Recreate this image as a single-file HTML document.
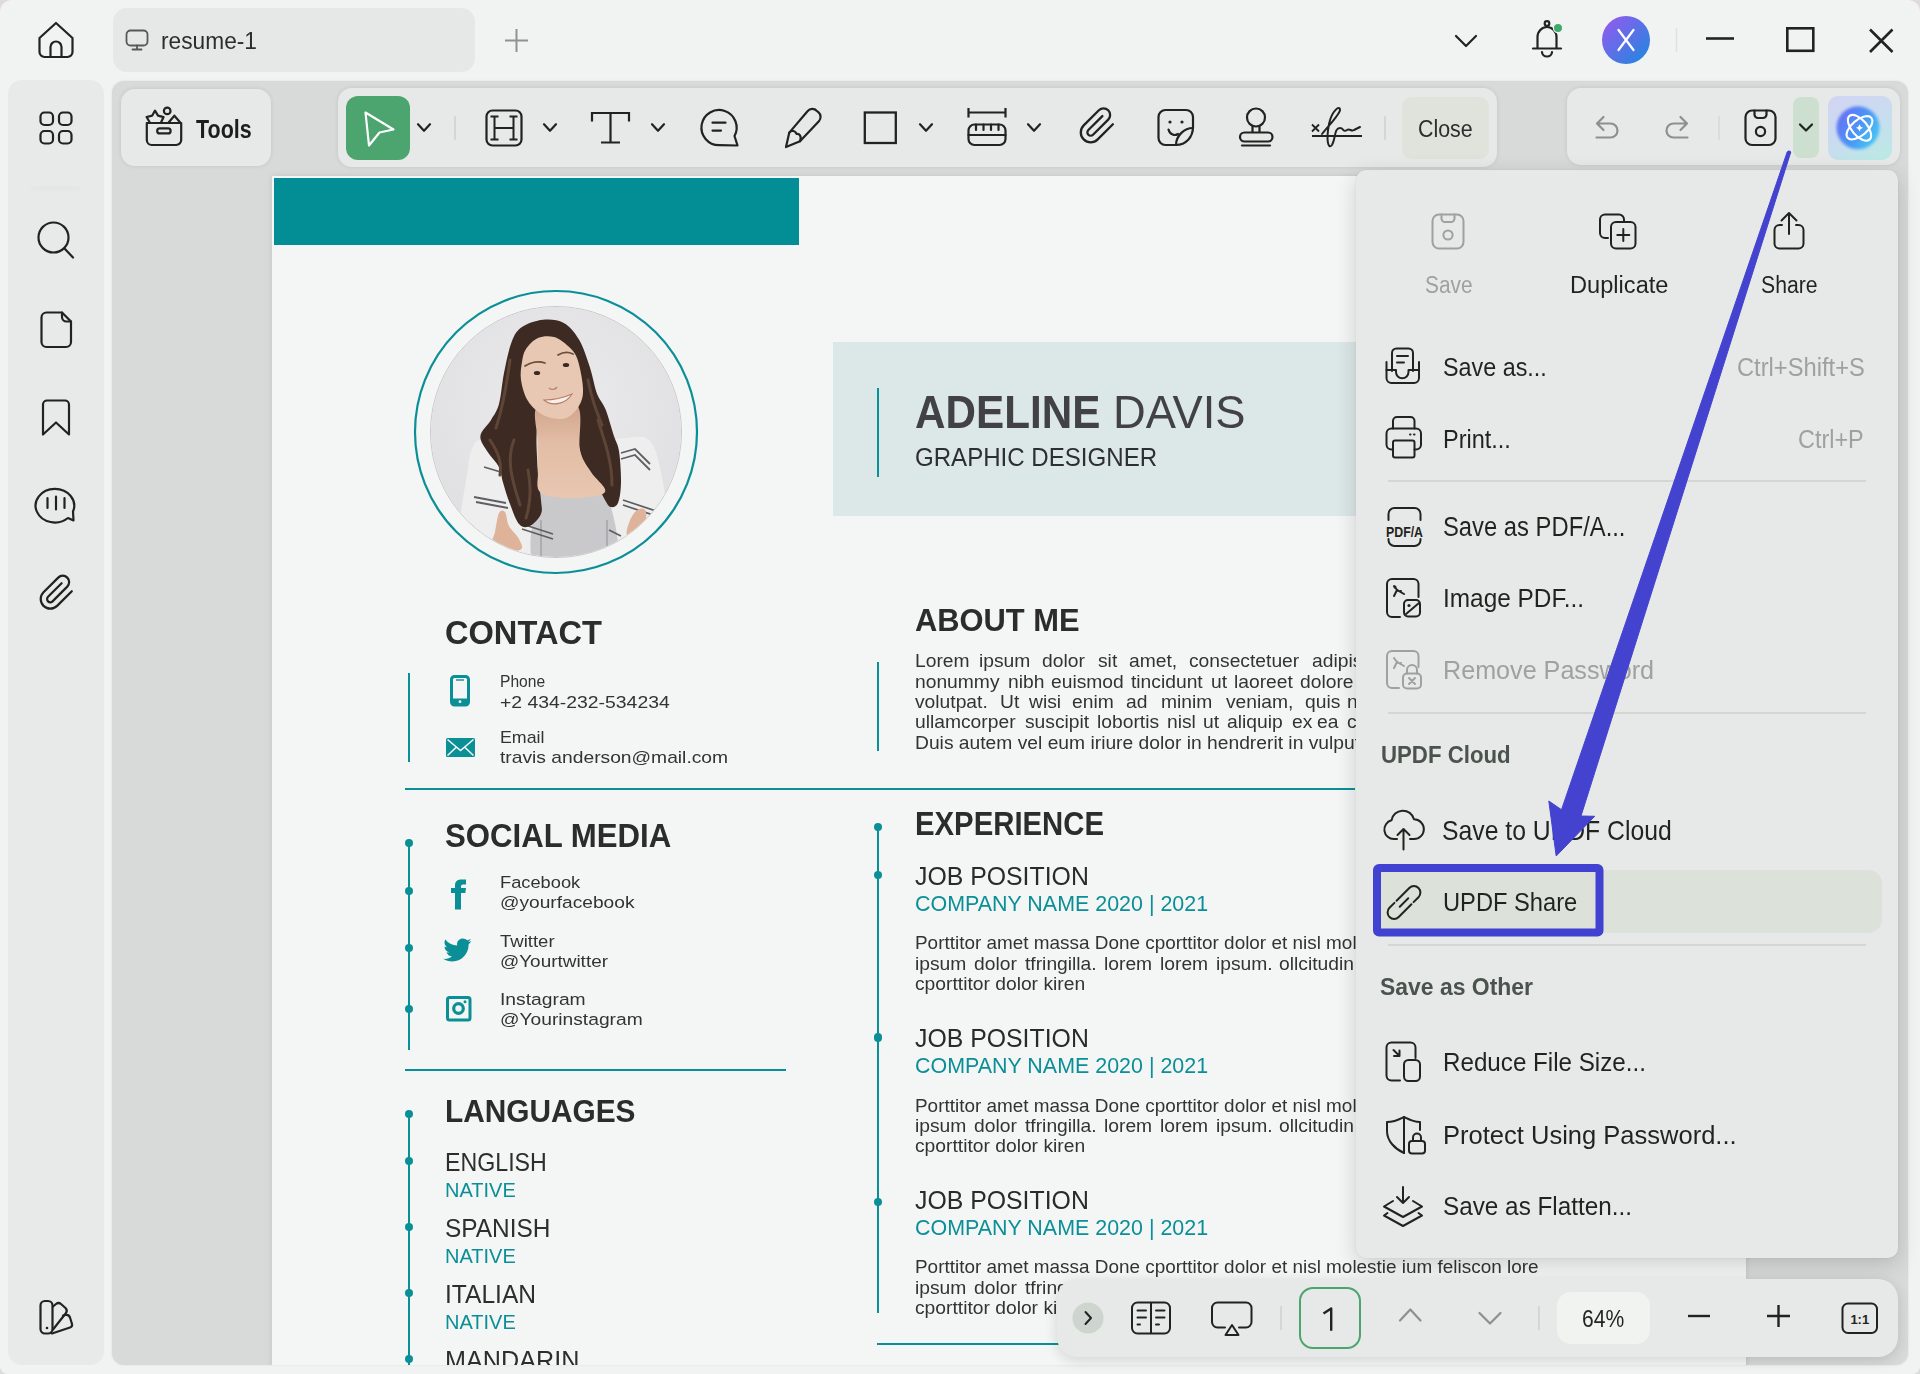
<!DOCTYPE html>
<html><head><meta charset="utf-8">
<style>
*{margin:0;padding:0;box-sizing:border-box}
html,body{width:1920px;height:1374px;overflow:hidden;background:#f1f3f2;font-family:"Liberation Sans",sans-serif}
.a{position:absolute}
svg.a{overflow:visible}
.t{position:absolute;white-space:nowrap;transform-origin:0 0}
</style></head><body>
<div class="a" style="left:0;top:0;width:1920px;height:1374px;background:#dfdbdd"></div><div class="a" style="left:0;top:0;width:1920px;height:1374px;background:#f1f3f2;border-radius:12px 12px 8px 8px"></div>
<div class="a" style="left:113px;top:8px;width:362px;height:64px;background:#e5e8e6;border-radius:14px;"></div>
<div class="t" id="t1" style="left:161.0px;top:29.1px;font-size:24.64px;line-height:24.64px;color:#2a2f2c;font-weight:normal;transform:scaleX(0.9231);">resume-1</div>
<div class="a" style="left:8px;top:80px;width:96px;height:1285px;background:#e7eae8;border-radius:14px;"></div>
<div class="a" style="left:32px;top:187px;width:48px;height:3px;background:#e2e5e3;border-radius:2px;filter:blur(1px)"></div>
<div class="a" style="left:112px;top:81px;width:1796px;height:1284px;background:#d8dada;border-radius:12px;overflow:hidden;box-shadow:0 0 3px rgba(0,0,0,.08)"><div class="a" style="left:-112px;top:-81px;width:1920px;height:1374px">
<div class="a" style="left:272px;top:176px;width:1474px;height:1300px;background:#f4f5f5;border-radius:0px;box-shadow:0 0 6px rgba(0,0,0,.10)"></div>
<div class="a" style="left:274px;top:178px;width:525px;height:67px;background:#038d95;border-radius:0px;"></div>
<div class="a" style="left:833px;top:342px;width:870px;height:174px;background:#dce7e8;border-radius:0px;"></div>
<div class="a" style="left:876.5px;top:388px;width:2.2px;height:89px;background:#0a8f97;border-radius:0px;"></div>
<div class="t" id="t2" style="left:915.0px;top:389.7px;font-size:45.65px;line-height:45.65px;color:#424244;font-weight:bold;transform:scaleX(0.9250);">ADELINE</div>
<div class="t" id="t3" style="left:1113.0px;top:389.7px;font-size:45.65px;line-height:45.65px;color:#424244;font-weight:normal;transform:scaleX(0.9925);">DAVIS</div>
<div class="t" id="t4" style="left:915.0px;top:443.7px;font-size:26.67px;line-height:26.67px;color:#2e2f30;font-weight:normal;transform:scaleX(0.9030);">GRAPHIC DESIGNER</div>
<div class="t" id="t5" style="left:444.6px;top:615.5px;font-size:33.33px;line-height:33.33px;color:#2c2c2c;font-weight:bold;transform:scaleX(0.9775);">CONTACT</div>
<div class="a" style="left:408px;top:672.5px;width:2.2px;height:89px;background:#0a8f97;border-radius:0px;"></div>
<div class="t" id="t6" style="left:500.0px;top:674.0px;font-size:16.81px;line-height:16.81px;color:#333;font-weight:normal;transform:scaleX(0.9286);">Phone</div>
<div class="t" id="t7" style="left:500.0px;top:694.5px;font-size:16.81px;line-height:16.81px;color:#333;font-weight:normal;transform:scaleX(1.1537);">+2 434-232-534234</div>
<div class="t" id="t8" style="left:500.0px;top:729.5px;font-size:16.81px;line-height:16.81px;color:#333;font-weight:normal;transform:scaleX(1.0595);">Email</div>
<div class="t" id="t9" style="left:500.0px;top:750.3px;font-size:16.81px;line-height:16.81px;color:#333;font-weight:normal;transform:scaleX(1.1457);">travis anderson@mail.com</div>
<div class="a" style="left:405px;top:788.2px;width:950px;height:2px;background:#0a8f97;border-radius:0px;"></div>
<div class="t" id="t10" style="left:444.6px;top:819.3px;font-size:33.19px;line-height:33.19px;color:#2c2c2c;font-weight:bold;transform:scaleX(0.9394);">SOCIAL MEDIA</div>
<div class="a" style="left:408px;top:843px;width:2.2px;height:207px;background:#0a8f97;border-radius:0px;"></div>
<div class="a" style="left:405.0px;top:838.6px;width:8.2px;height:8.2px;border-radius:50%;background:#0a8f97"></div>
<div class="a" style="left:405.0px;top:886.5px;width:8.2px;height:8.2px;border-radius:50%;background:#0a8f97"></div>
<div class="a" style="left:405.0px;top:943.9px;width:8.2px;height:8.2px;border-radius:50%;background:#0a8f97"></div>
<div class="a" style="left:405.0px;top:1004.9px;width:8.2px;height:8.2px;border-radius:50%;background:#0a8f97"></div>
<div class="t" id="t11" style="left:500.0px;top:874.8px;font-size:16.67px;line-height:16.67px;color:#333;font-weight:normal;transform:scaleX(1.0959);">Facebook</div>
<div class="t" id="t12" style="left:500.0px;top:895.4px;font-size:16.52px;line-height:16.52px;color:#333;font-weight:normal;transform:scaleX(1.1603);">@yourfacebook</div>
<div class="t" id="t13" style="left:500.0px;top:933.8px;font-size:16.67px;line-height:16.67px;color:#333;font-weight:normal;transform:scaleX(1.1122);">Twitter</div>
<div class="t" id="t14" style="left:500.0px;top:953.5px;font-size:16.67px;line-height:16.67px;color:#333;font-weight:normal;transform:scaleX(1.1368);">@Yourtwitter</div>
<div class="t" id="t15" style="left:500.0px;top:991.8px;font-size:16.67px;line-height:16.67px;color:#333;font-weight:normal;transform:scaleX(1.1568);">Instagram</div>
<div class="t" id="t16" style="left:500.0px;top:1011.8px;font-size:16.67px;line-height:16.67px;color:#333;font-weight:normal;transform:scaleX(1.1532);">@Yourinstagram</div>
<div class="a" style="left:405px;top:1068.6px;width:381px;height:2px;background:#0a8f97;border-radius:0px;"></div>
<div class="t" id="t17" style="left:444.9px;top:1095.2px;font-size:32.03px;line-height:32.03px;color:#2c2c2c;font-weight:bold;transform:scaleX(0.9312);">LANGUAGES</div>
<div class="a" style="left:408px;top:1114px;width:2.2px;height:260px;background:#0a8f97;border-radius:0px;"></div>
<div class="a" style="left:405.0px;top:1109.5px;width:8.2px;height:8.2px;border-radius:50%;background:#0a8f97"></div>
<div class="a" style="left:405.0px;top:1157.2px;width:8.2px;height:8.2px;border-radius:50%;background:#0a8f97"></div>
<div class="a" style="left:405.0px;top:1223.2px;width:8.2px;height:8.2px;border-radius:50%;background:#0a8f97"></div>
<div class="a" style="left:405.0px;top:1289.3000000000002px;width:8.2px;height:8.2px;border-radius:50%;background:#0a8f97"></div>
<div class="a" style="left:405.0px;top:1355.2px;width:8.2px;height:8.2px;border-radius:50%;background:#0a8f97"></div>
<div class="t" id="t18" style="left:444.5px;top:1150.4px;font-size:25.36px;line-height:25.36px;color:#2e2e2e;font-weight:normal;transform:scaleX(0.9144);">ENGLISH</div>
<div class="t" id="t19" style="left:444.5px;top:1180.1px;font-size:20.72px;line-height:20.72px;color:#0a8f97;font-weight:normal;transform:scaleX(0.9658);">NATIVE</div>
<div class="t" id="t20" style="left:444.5px;top:1216.4px;font-size:25.36px;line-height:25.36px;color:#2e2e2e;font-weight:normal;transform:scaleX(0.9633);">SPANISH</div>
<div class="t" id="t21" style="left:444.5px;top:1246.0px;font-size:20.72px;line-height:20.72px;color:#0a8f97;font-weight:normal;transform:scaleX(0.9658);">NATIVE</div>
<div class="t" id="t22" style="left:444.5px;top:1282.4px;font-size:25.36px;line-height:25.36px;color:#2e2e2e;font-weight:normal;transform:scaleX(0.9691);">ITALIAN</div>
<div class="t" id="t23" style="left:444.5px;top:1312.2px;font-size:20.72px;line-height:20.72px;color:#0a8f97;font-weight:normal;transform:scaleX(0.9658);">NATIVE</div>
<div class="t" id="t24" style="left:444.5px;top:1348.4px;font-size:25.36px;line-height:25.36px;color:#2e2e2e;font-weight:normal;transform:scaleX(0.9933);">MANDARIN</div>
<div class="t" id="t25" style="left:914.7px;top:605.2px;font-size:31.74px;line-height:31.74px;color:#2c2c2c;font-weight:bold;transform:scaleX(0.9722);">ABOUT ME</div>
<div class="a" style="left:876.5px;top:661.6px;width:2.2px;height:89px;background:#0a8f97;border-radius:0px;"></div>
<!--para-->
<div class="t" style="left:914.7px;top:652.1px;font-size:18.26px;line-height:18.26px;color:#333;transform:scaleX(1.0547)">Lorem</div>
<div class="t" style="left:978.5px;top:652.1px;font-size:18.26px;line-height:18.26px;color:#333;transform:scaleX(1.0547)">ipsum</div>
<div class="t" style="left:1042.3px;top:652.1px;font-size:18.26px;line-height:18.26px;color:#333;transform:scaleX(1.0547)">dolor</div>
<div class="t" style="left:1097.5px;top:652.1px;font-size:18.26px;line-height:18.26px;color:#333;transform:scaleX(1.0547)">sit</div>
<div class="t" style="left:1128.75px;top:652.1px;font-size:18.26px;line-height:18.26px;color:#333;transform:scaleX(1.0547)">amet,</div>
<div class="t" style="left:1189.4px;top:652.1px;font-size:18.26px;line-height:18.26px;color:#333;transform:scaleX(1.0547)">consectetuer</div>
<div class="t" style="left:1312.3px;top:652.1px;font-size:18.26px;line-height:18.26px;color:#333;transform:scaleX(1.0547)">adipiscing</div>
<div class="t" style="left:914.7px;top:672.7px;font-size:18.26px;line-height:18.26px;color:#333;transform:scaleX(1.0547)">nonummy</div>
<div class="t" style="left:1007.6px;top:672.7px;font-size:18.26px;line-height:18.26px;color:#333;transform:scaleX(1.0547)">nibh</div>
<div class="t" style="left:1050.6px;top:672.7px;font-size:18.26px;line-height:18.26px;color:#333;transform:scaleX(1.0547)">euismod</div>
<div class="t" style="left:1130.8px;top:672.7px;font-size:18.26px;line-height:18.26px;color:#333;transform:scaleX(1.0547)">tincidunt</div>
<div class="t" style="left:1210.8px;top:672.7px;font-size:18.26px;line-height:18.26px;color:#333;transform:scaleX(1.0547)">ut</div>
<div class="t" style="left:1234.2px;top:672.7px;font-size:18.26px;line-height:18.26px;color:#333;transform:scaleX(1.0547)">laoreet</div>
<div class="t" style="left:1299.6px;top:672.7px;font-size:18.26px;line-height:18.26px;color:#333;transform:scaleX(1.0547)">dolore</div>
<div class="t" style="left:914.7px;top:693.0px;font-size:18.26px;line-height:18.26px;color:#333;transform:scaleX(1.0547)">volutpat.</div>
<div class="t" style="left:999.8px;top:693.0px;font-size:18.26px;line-height:18.26px;color:#333;transform:scaleX(1.0547)">Ut</div>
<div class="t" style="left:1029.3px;top:693.0px;font-size:18.26px;line-height:18.26px;color:#333;transform:scaleX(1.0547)">wisi</div>
<div class="t" style="left:1071.7px;top:693.0px;font-size:18.26px;line-height:18.26px;color:#333;transform:scaleX(1.0547)">enim</div>
<div class="t" style="left:1126px;top:693.0px;font-size:18.26px;line-height:18.26px;color:#333;transform:scaleX(1.0547)">ad</div>
<div class="t" style="left:1160.8px;top:693.0px;font-size:18.26px;line-height:18.26px;color:#333;transform:scaleX(1.0547)">minim</div>
<div class="t" style="left:1225.9px;top:693.0px;font-size:18.26px;line-height:18.26px;color:#333;transform:scaleX(1.0547)">veniam,</div>
<div class="t" style="left:1304.5px;top:693.0px;font-size:18.26px;line-height:18.26px;color:#333;transform:scaleX(1.0547)">quis</div>
<div class="t" style="left:1347px;top:693.0px;font-size:18.26px;line-height:18.26px;color:#333;transform:scaleX(1.0547)">nostrud</div>
<div class="t" style="left:914.7px;top:713.3px;font-size:18.26px;line-height:18.26px;color:#333;transform:scaleX(1.0547)">ullamcorper</div>
<div class="t" style="left:1024.6px;top:713.3px;font-size:18.26px;line-height:18.26px;color:#333;transform:scaleX(1.0547)">suscipit</div>
<div class="t" style="left:1097px;top:713.3px;font-size:18.26px;line-height:18.26px;color:#333;transform:scaleX(1.0547)">lobortis</div>
<div class="t" style="left:1167.3px;top:713.3px;font-size:18.26px;line-height:18.26px;color:#333;transform:scaleX(1.0547)">nisl</div>
<div class="t" style="left:1203.2px;top:713.3px;font-size:18.26px;line-height:18.26px;color:#333;transform:scaleX(1.0547)">ut</div>
<div class="t" style="left:1227.2px;top:713.3px;font-size:18.26px;line-height:18.26px;color:#333;transform:scaleX(1.0547)">aliquip</div>
<div class="t" style="left:1292.3px;top:713.3px;font-size:18.26px;line-height:18.26px;color:#333;transform:scaleX(1.0547)">ex</div>
<div class="t" style="left:1317px;top:713.3px;font-size:18.26px;line-height:18.26px;color:#333;transform:scaleX(1.0547)">ea</div>
<div class="t" style="left:1347px;top:713.3px;font-size:18.26px;line-height:18.26px;color:#333;transform:scaleX(1.0547)">commodo</div>
<div class="t" style="left:914.7px;top:733.9px;font-size:18.26px;line-height:18.26px;color:#333;transform:scaleX(1.0547)">Duis autem vel eum iriure dolor in hendrerit in vulputate</div>
<div class="t" id="t26" style="left:914.7px;top:808.3px;font-size:32.61px;line-height:32.61px;color:#2c2c2c;font-weight:bold;transform:scaleX(0.8990);">EXPERIENCE</div>
<div class="a" style="left:876.5px;top:827px;width:2.2px;height:486px;background:#0a8f97;border-radius:0px;"></div>
<div class="a" style="left:873.5px;top:822.6999999999999px;width:8.2px;height:8.2px;border-radius:50%;background:#0a8f97"></div>
<div class="a" style="left:873.5px;top:870.9px;width:8.2px;height:8.2px;border-radius:50%;background:#0a8f97"></div>
<div class="a" style="left:873.5px;top:1033.4px;width:8.2px;height:8.2px;border-radius:50%;background:#0a8f97"></div>
<div class="a" style="left:873.5px;top:1197.9px;width:8.2px;height:8.2px;border-radius:50%;background:#0a8f97"></div>
<div class="t" id="t27" style="left:914.7px;top:863.6px;font-size:25.65px;line-height:25.65px;color:#2a2a2a;font-weight:normal;transform:scaleX(0.9683);">JOB POSITION</div>
<div class="t" id="t28" style="left:914.7px;top:892.9px;font-size:21.88px;line-height:21.88px;color:#0a8f97;font-weight:normal;transform:scaleX(0.9799);">COMPANY NAME 2020 | 2021</div>
<div class="t" id="pl1" style="left:914.7px;top:934.2px;font-size:18.26px;line-height:18.26px;color:#333;transform:scaleX(1.0366)">Porttitor amet massa Done cporttitor dolor et nisl molestie ium feliscon lore</div>
<div class="t" style="left:914.7px;top:954.5px;font-size:18.26px;line-height:18.26px;color:#333;transform:scaleX(1.0547)">ipsum</div>
<div class="t" style="left:974px;top:954.5px;font-size:18.26px;line-height:18.26px;color:#333;transform:scaleX(1.0547)">dolor</div>
<div class="t" style="left:1024.6px;top:954.5px;font-size:18.26px;line-height:18.26px;color:#333;transform:scaleX(1.0547)">tfringilla.</div>
<div class="t" style="left:1103.5px;top:954.5px;font-size:18.26px;line-height:18.26px;color:#333;transform:scaleX(1.0547)">lorem</div>
<div class="t" style="left:1159.5px;top:954.5px;font-size:18.26px;line-height:18.26px;color:#333;transform:scaleX(1.0547)">lorem</div>
<div class="t" style="left:1216px;top:954.5px;font-size:18.26px;line-height:18.26px;color:#333;transform:scaleX(1.0547)">ipsum.</div>
<div class="t" style="left:1279.3px;top:954.5px;font-size:18.26px;line-height:18.26px;color:#333;transform:scaleX(1.0547)">ollcitudin</div>
<div class="t" id="pl3" style="left:914.7px;top:974.9px;font-size:18.26px;line-height:18.26px;color:#333;transform:scaleX(1.0547)">cporttitor dolor kiren</div>
<div class="t" id="t29" style="left:914.7px;top:1026.1px;font-size:25.65px;line-height:25.65px;color:#2a2a2a;font-weight:normal;transform:scaleX(0.9683);">JOB POSITION</div>
<div class="t" id="t30" style="left:914.7px;top:1055.4px;font-size:21.88px;line-height:21.88px;color:#0a8f97;font-weight:normal;transform:scaleX(0.9799);">COMPANY NAME 2020 | 2021</div>
<div class="t" id="pl1" style="left:914.7px;top:1096.7px;font-size:18.26px;line-height:18.26px;color:#333;transform:scaleX(1.0366)">Porttitor amet massa Done cporttitor dolor et nisl molestie ium feliscon lore</div>
<div class="t" style="left:914.7px;top:1117.0px;font-size:18.26px;line-height:18.26px;color:#333;transform:scaleX(1.0547)">ipsum</div>
<div class="t" style="left:974px;top:1117.0px;font-size:18.26px;line-height:18.26px;color:#333;transform:scaleX(1.0547)">dolor</div>
<div class="t" style="left:1024.6px;top:1117.0px;font-size:18.26px;line-height:18.26px;color:#333;transform:scaleX(1.0547)">tfringilla.</div>
<div class="t" style="left:1103.5px;top:1117.0px;font-size:18.26px;line-height:18.26px;color:#333;transform:scaleX(1.0547)">lorem</div>
<div class="t" style="left:1159.5px;top:1117.0px;font-size:18.26px;line-height:18.26px;color:#333;transform:scaleX(1.0547)">lorem</div>
<div class="t" style="left:1216px;top:1117.0px;font-size:18.26px;line-height:18.26px;color:#333;transform:scaleX(1.0547)">ipsum.</div>
<div class="t" style="left:1279.3px;top:1117.0px;font-size:18.26px;line-height:18.26px;color:#333;transform:scaleX(1.0547)">ollcitudin</div>
<div class="t" id="pl3" style="left:914.7px;top:1137.4px;font-size:18.26px;line-height:18.26px;color:#333;transform:scaleX(1.0547)">cporttitor dolor kiren</div>
<div class="t" id="t31" style="left:914.7px;top:1187.6px;font-size:25.65px;line-height:25.65px;color:#2a2a2a;font-weight:normal;transform:scaleX(0.9683);">JOB POSITION</div>
<div class="t" id="t32" style="left:914.7px;top:1216.9px;font-size:21.88px;line-height:21.88px;color:#0a8f97;font-weight:normal;transform:scaleX(0.9799);">COMPANY NAME 2020 | 2021</div>
<div class="t" id="pl1" style="left:914.7px;top:1258.2px;font-size:18.26px;line-height:18.26px;color:#333;transform:scaleX(1.0366)">Porttitor amet massa Done cporttitor dolor et nisl molestie ium feliscon lore</div>
<div class="t" style="left:914.7px;top:1278.5px;font-size:18.26px;line-height:18.26px;color:#333;transform:scaleX(1.0547)">ipsum</div>
<div class="t" style="left:974px;top:1278.5px;font-size:18.26px;line-height:18.26px;color:#333;transform:scaleX(1.0547)">dolor</div>
<div class="t" style="left:1024.6px;top:1278.5px;font-size:18.26px;line-height:18.26px;color:#333;transform:scaleX(1.0547)">tfringilla.</div>
<div class="t" style="left:1103.5px;top:1278.5px;font-size:18.26px;line-height:18.26px;color:#333;transform:scaleX(1.0547)">lorem</div>
<div class="t" style="left:1159.5px;top:1278.5px;font-size:18.26px;line-height:18.26px;color:#333;transform:scaleX(1.0547)">lorem</div>
<div class="t" style="left:1216px;top:1278.5px;font-size:18.26px;line-height:18.26px;color:#333;transform:scaleX(1.0547)">ipsum.</div>
<div class="t" style="left:1279.3px;top:1278.5px;font-size:18.26px;line-height:18.26px;color:#333;transform:scaleX(1.0547)">ollcitudin</div>
<div class="t" id="pl3" style="left:914.7px;top:1298.9px;font-size:18.26px;line-height:18.26px;color:#333;transform:scaleX(1.0547)">cporttitor dolor kiren</div>
<div class="a" style="left:877px;top:1343.2px;width:900px;height:2px;background:#0a8f97;border-radius:0px;"></div>
<svg class="a" width="1920" height="1374" viewBox="0 0 1920 1374" style="left:0;top:0;">
<defs><clipPath id="pc"><circle cx="556" cy="432" r="125"/></clipPath>
<radialGradient id="bgp" cx="50%" cy="40%" r="65%"><stop offset="0" stop-color="#ebebed"/><stop offset="1" stop-color="#dedee0"/></radialGradient>
<linearGradient id="neckg" x1="0" y1="0" x2="0" y2="1"><stop offset="0" stop-color="#cfa189"/><stop offset="0.45" stop-color="#e3bea6"/><stop offset="1" stop-color="#e8c6b0"/></linearGradient>
</defs>
<circle cx="556" cy="432" r="141" fill="none" stroke="#0a8f97" stroke-width="2.2"/>
<circle cx="556" cy="432" r="125.5" fill="#f5f5f5" stroke="#bdbdbf" stroke-width="0.8"/>
<g clip-path="url(#pc)">
<rect x="420" y="300" width="272" height="265" fill="url(#bgp)"/>
<path d="M480 440 C485.3 439.0 489.8 453.2 500 462 C510.2 470.8 532.7 475.0 541 493 C549.3 511.0 562.8 557.2 550 570 C537.2 582.8 477.7 587.0 464 570 C450.3 553.0 465.3 489.7 468 468 C470.7 446.3 474.7 441.0 480 440 Z" fill="#efeeee"/>
<path d="M600 452 C603.2 441.7 615.7 438.0 625 438 C634.3 438.0 648.8 430.0 656 452 C663.2 474.0 675.7 550.3 668 570 C660.3 589.7 620.3 581.7 610 570 C599.7 558.3 607.7 519.7 606 500 C604.3 480.3 596.8 462.3 600 452 Z" fill="#efeeee"/>
<path d="M541 491 C547.5 478.8 564.3 497.0 575 497 C585.7 497.0 598.5 478.8 605 491 C611.5 503.2 625.5 556.8 614 570 C602.5 583.2 548.2 583.2 536 570 C523.8 556.8 534.5 503.2 541 491 Z" fill="#c9c8ca"/>
<path d="M541 520 V570 M607 520 V570" stroke="#9a9a9e" stroke-width="1.2"/>
<path d="M484 467 L504 473 M474 497 L506 503 M476 502 L508 508 M522 524 L553 534 M522 529 L553 539 M621 453 L635 449 L650 464 M621 459 L635 455 L650 470 M623 500 L656 511 M623 505 L656 516 M609 530 L621 536" stroke="#5f5f63" stroke-width="1.8" fill="none"/>
<path d="M543 319.8 C550.0 319.1 557.8 319.7 563.75 323 C569.8 326.3 574.6 332.2 579 339.6 C583.4 347.1 587.0 358.7 590 367.7 C593.0 376.7 594.4 386.9 597 393.75 C599.6 400.6 602.6 402.1 605.4 409 C608.2 415.9 611.5 428.4 613.75 435.4 C616.0 442.4 617.8 443.1 619 451 C620.2 458.9 621.2 473.8 621 482.5 C620.8 491.2 619.7 498.9 618 503 C616.3 507.1 612.8 507.5 610.6 507 C608.4 506.5 607.8 504.8 605 500 C602.2 495.2 598.0 485.5 594 478 C590.0 470.5 584.2 463.8 581 455 C577.8 446.2 579.2 430.7 575 425 C570.8 419.3 562.2 421.0 556 421 C549.8 421.0 541.0 416.8 538 425 C535.0 433.2 537.2 457.5 537.7 470 C538.2 482.5 540.5 492.7 541 500 C541.5 507.3 542.8 509.7 541 514 C539.2 518.3 533.7 524.3 530 526 C526.3 527.7 522.4 527.8 519 524 C515.6 520.2 512.3 509.9 509.6 503 C506.9 496.1 504.8 488.5 503 482.5 C501.2 476.5 501.6 472.1 499 467 C496.4 461.9 490.8 457.2 487.7 452 C484.6 446.8 479.8 441.3 480.4 436 C480.9 430.7 487.9 425.3 491 420 C494.1 414.7 496.8 411.8 499 404 C501.2 396.2 501.9 383.4 504 373 C506.1 362.6 508.7 349.4 511.7 341.7 C514.7 334.0 516.8 330.6 522 327 C527.2 323.4 536.0 320.5 543 319.8 Z" fill="#3d2b23"/>
<path d="M510 360 C506 390 502 410 496 428 M514 440 C506 460 512 480 520 505 M490 440 C498 452 502 462 500 475 M598 420 C604 440 612 460 612 485 M588 380 C592 400 596 410 602 425 M528 470 C532 490 530 505 526 518" stroke="#5e4536" stroke-width="3" fill="none" stroke-linecap="round"/>
<path d="M538 405 C544.6 399.2 570.0 397.5 577 405 C584.0 412.5 577.7 438.8 580 450 C582.3 461.2 586.8 465.0 591 472 C595.2 479.0 607.7 487.7 605 492 C602.3 496.3 585.7 497.8 575 498 C564.3 498.2 547.2 497.7 541 493 C534.8 488.3 538.6 478.8 538 470 C537.4 461.2 537.5 450.8 537.5 440 C537.5 429.2 531.4 410.8 538 405 Z" fill="url(#neckg)"/>
<path d="M526 349 C528.7 345.0 533.3 340.0 538 338 C542.7 336.0 549.0 335.7 554 337 C559.0 338.3 564.2 342.5 568 346 C571.8 349.5 574.6 351.8 577 358 C579.4 364.2 581.7 376.2 582.5 383 C583.3 389.8 583.4 394.1 582 399 C580.6 403.9 577.4 409.2 574 412.5 C570.6 415.8 566.9 418.6 561.7 419 C556.5 419.4 548.6 418.0 543 415 C537.4 412.0 531.7 406.8 528 401 C524.3 395.2 522.0 386.5 521 380 C520.0 373.5 521.2 367.2 522 362 C522.8 356.8 523.3 353.0 526 349 Z" fill="#e9c8b3"/>

<path d="M525 366 C531 362 539 361 545 363 M558 355 C563 352 569 352 573 354" stroke="#6a4e3c" stroke-width="1.8" fill="none" stroke-linecap="round"/>
<ellipse cx="537" cy="373" rx="3.2" ry="2" fill="#3a2a23"/><ellipse cx="566" cy="365" rx="3.2" ry="2" fill="#3a2a23"/>
<path d="M549 388 C551 390 555 390 557 387" stroke="#b88670" stroke-width="1.4" fill="none"/>
<path d="M544 400 C552 407 566 404 572 394 C563 398 552 400 544 400 Z" fill="#f7efe9" stroke="#b97d6a" stroke-width="1.1"/>
<path d="M492 549 C487.8 546.0 493.8 538.0 495 532 C496.2 526.0 497.3 516.3 499 513 C500.7 509.7 503.3 509.8 505 512 C506.7 514.2 506.7 521.5 509 526 C511.3 530.5 517.2 535.0 519 539 C520.8 543.0 524.5 548.3 520 550 C515.5 551.7 496.2 552.0 492 549 Z" fill="#dfb39a"/>
<path d="M627 535 C625.0 532.8 629.0 522.3 631 518 C633.0 513.7 636.5 510.0 639 509 C641.5 508.0 645.3 508.3 646 512 C646.7 515.7 646.2 527.2 643 531 C639.8 534.8 629.0 537.2 627 535 Z" fill="#dfb39a"/>
</g></svg>
</div></div>
<div class="a" style="left:121px;top:89px;width:150px;height:77px;background:#e6e9e7;border-radius:14px;box-shadow:0 0 4px rgba(0,0,0,.10)"></div>
<div class="t" id="t33" style="left:196.0px;top:116.3px;font-size:26.09px;line-height:26.09px;color:#1a1f1c;font-weight:bold;transform:scaleX(0.8235);">Tools</div>
<div class="a" style="left:337.5px;top:88px;width:1159.5px;height:79px;background:#e6e9e7;border-radius:14px;box-shadow:0 0 4px rgba(0,0,0,.10)"></div>
<div class="a" style="left:346px;top:96px;width:64px;height:64px;background:#4ca46e;border-radius:12px;"></div>
<div class="a" style="left:1402px;top:97px;width:87px;height:62px;background:#dfe3dc;border-radius:10px;"></div>
<div class="t" id="t34" style="left:1418.3px;top:117.5px;font-size:23.33px;line-height:23.33px;color:#2a2f2c;font-weight:normal;transform:scaleX(0.9167);">Close</div>
<div class="a" style="left:1567px;top:88px;width:333px;height:77px;background:#e6e9e7;border-radius:14px;box-shadow:0 0 4px rgba(0,0,0,.10)"></div>
<div class="a" style="left:1793px;top:97px;width:26px;height:61px;background:#cde0d0;border-radius:8px;"></div>
<div class="a" style="left:1828px;top:96px;width:64px;height:64px;border-radius:10px;background:linear-gradient(150deg,#d3d4f3 0%,#c9dcef 50%,#b9ebe3 100%)"></div>
<svg class="a" width="1920" height="1374" viewBox="0 0 1920 1374" style="left:0;top:0;">
<defs><linearGradient id="av" x1="0" y1="0" x2="1" y2="1"><stop offset="0" stop-color="#9b57f0"/><stop offset="1" stop-color="#1a8ade"/></linearGradient>
<linearGradient id="ai" x1="0" y1="0.2" x2="1" y2="0.8"><stop offset="0" stop-color="#6a6ef6"/><stop offset="0.5" stop-color="#4a95f6"/><stop offset="1" stop-color="#45ccf2"/></linearGradient></defs>
<!-- home -->
<path d="M39.5 38 L56 23 L72.5 38 V52 a5 5 0 0 1 -5 5 H44.5 a5 5 0 0 1 -5 -5 Z" fill="none" stroke="#1f2421" stroke-width="2.2" stroke-linecap="round" stroke-linejoin="round"/>
<path d="M50.5 57 V47 a5.5 5.5 0 0 1 11 0 V57" fill="none" stroke="#1f2421" stroke-width="2.2" stroke-linecap="round" stroke-linejoin="round"/>
<!-- monitor -->
<rect x="126.5" y="30.5" width="21" height="15" rx="4" fill="none" stroke="#555a57" stroke-width="1.8"/>
<path d="M137 45.5 V49.5 M132.5 49.5 H141.5" fill="none" stroke="#555a57" stroke-width="1.8" stroke-linecap="round"/>
<!-- plus -->
<path d="M505 40.5 H528 M516.5 29 V52" fill="none" stroke="#8f9390" stroke-width="2"/>
<!-- chevron tab -->
<path d="M1456 36 L1466 46 L1476 36" fill="none" stroke="#1f2421" stroke-width="2.2" stroke-linecap="round" stroke-linejoin="round"/>
<!-- bell -->
<path d="M1537.5 48 V37 a9.5 10 0 0 1 19 0 V48" fill="none" stroke="#1f2421" stroke-width="2.2" stroke-linecap="round" stroke-linejoin="round"/>
<path d="M1533 48.5 H1561" fill="none" stroke="#1f2421" stroke-width="2.2" stroke-linecap="round" stroke-linejoin="round"/>
<path d="M1542 52 a5 4.5 0 0 0 10 0" fill="none" stroke="#1f2421" stroke-width="2.2" stroke-linecap="round" stroke-linejoin="round"/>
<circle cx="1547" cy="23.5" r="2.3" fill="none" stroke="#1f2421" stroke-width="2.2" stroke-linecap="round" stroke-linejoin="round"/>
<circle cx="1558" cy="28" r="4.6" fill="#3fa86b" stroke="#f1f3f2" stroke-width="1.2"/>
<!-- avatar -->
<circle cx="1626" cy="40" r="24" fill="url(#av)"/>
<path d="M1618.5 30 L1633.5 50 M1633.5 30 L1618.5 50" stroke="#fff" stroke-width="2.2" stroke-linecap="round"/>
<path d="M1676.5 28 V52" stroke="#dde0de" stroke-width="1.5"/>
<path d="M1706 38.5 H1734" stroke="#1f2421" stroke-width="2.6"/>
<rect x="1787.3" y="28.3" width="26" height="22.5" fill="none" stroke="#1f2421" stroke-width="2.6"/>
<path d="M1870 29.5 L1892.5 52 M1892.5 29.5 L1870 52" stroke="#1f2421" stroke-width="2.6"/>
<!-- sidebar -->
<rect x="40.5" y="112.5" width="12.5" height="12.5" rx="4" fill="none" stroke="#1f2421" stroke-width="2.2" stroke-linecap="round" stroke-linejoin="round"/>
<rect x="59" y="112.5" width="12.5" height="12.5" rx="4" fill="none" stroke="#1f2421" stroke-width="2.2" stroke-linecap="round" stroke-linejoin="round"/>
<rect x="40.5" y="131" width="12.5" height="12.5" rx="4" fill="none" stroke="#1f2421" stroke-width="2.2" stroke-linecap="round" stroke-linejoin="round"/>
<rect x="59" y="131" width="12.5" height="12.5" rx="4" fill="none" stroke="#1f2421" stroke-width="2.2" stroke-linecap="round" stroke-linejoin="round"/>
<circle cx="53.5" cy="237.5" r="15" fill="none" stroke="#1f2421" stroke-width="2.2" stroke-linecap="round" stroke-linejoin="round"/>
<path d="M64.5 248.5 L73 257.5" fill="none" stroke="#1f2421" stroke-width="2.2" stroke-linecap="round" stroke-linejoin="round"/>
<path d="M46.5 312.5 H62 L71 321.5 V342 a5 5 0 0 1 -5 5 H46.5 a5 5 0 0 1 -5 -5 V317.5 a5 5 0 0 1 5 -5 Z" fill="none" stroke="#1f2421" stroke-width="2.2" stroke-linecap="round" stroke-linejoin="round"/>
<path d="M62 312.5 V317 a4.5 4.5 0 0 0 4.5 4.5 H71" fill="none" stroke="#1f2421" stroke-width="2.2" stroke-linecap="round" stroke-linejoin="round"/>
<path d="M43 434.5 V404.5 a4 4 0 0 1 4 -4 H65 a4 4 0 0 1 4 4 V434.5 L56 422.5 Z" fill="none" stroke="#1f2421" stroke-width="2.2" stroke-linecap="round" stroke-linejoin="round"/>
<path d="M73.5 520.5 L68 518 A19.3 16.8 0 1 1 73 511.5 Z" fill="none" stroke="#1f2421" stroke-width="2.2" stroke-linecap="round" stroke-linejoin="round"/>
<path d="M47.5 498 V508 M56 496.5 V509.5 M64.5 498 V508" fill="none" stroke="#1f2421" stroke-width="2.2" stroke-linecap="round" stroke-linejoin="round"/>
<path d="M21.44 11.05l-9.19 9.19a6 6 0 0 1-8.49-8.49l9.19-9.19a4 4 0 0 1 5.66 5.66l-9.2 9.19a2 2 0 0 1-2.83-2.83l8.49-8.48" fill="none" stroke="#1f2421" stroke-width="1.4" stroke-linecap="round" stroke-linejoin="round" transform="translate(37.5 573.5) scale(1.6)"/>
<!-- bottom sidebar icon -->
<g transform="translate(0 1.5)">
<rect x="40.5" y="1299.5" width="12" height="32.5" rx="4.5" fill="none" stroke="#1f2421" stroke-width="2.2" stroke-linecap="round" stroke-linejoin="round"/>
<path d="M53 1305 L56 1302.5 a4 4 0 0 1 5 0 L65.5 1306.5 a4 4 0 0 1 0.5 5 L53 1328" fill="none" stroke="#1f2421" stroke-width="2.2" stroke-linecap="round" stroke-linejoin="round"/>
<path d="M52 1332 L70 1326 a3 3 0 0 0 2 -3.5 L70 1316 a4 4 0 0 0 -4.5 -2.5 L63 1314" fill="none" stroke="#1f2421" stroke-width="2.2" stroke-linecap="round" stroke-linejoin="round"/>
<circle cx="47" cy="1326.5" r="1.3" fill="#1f2421"/>
</g>
<!-- tools icon -->
<path d="M146.8 123 H181.2 V140 a5 5 0 0 1 -5 5 H151.8 a5 5 0 0 1 -5 -5 Z" fill="none" stroke="#1f2421" stroke-width="2.2" stroke-linecap="round" stroke-linejoin="round"/>
<rect x="157.2" y="128.4" width="13.4" height="5" rx="2.5" fill="none" stroke="#1f2421" stroke-width="2.2" stroke-linecap="round" stroke-linejoin="round" stroke-width="2"/>
<path d="M149.8 122.5 L146.6 117 L152.3 115.6 L155 110.6 L158 115.6 L163.6 117.1 L161 122.5" fill="none" stroke="#1f2421" stroke-width="2.2" stroke-linecap="round" stroke-linejoin="round" stroke-width="2"/>
<circle cx="167.2" cy="110.9" r="3.3" fill="none" stroke="#1f2421" stroke-width="2.2" stroke-linecap="round" stroke-linejoin="round" stroke-width="2"/>
<path d="M168.8 122.3 L174.4 115.7 L180 122.3" fill="none" stroke="#1f2421" stroke-width="2.2" stroke-linecap="round" stroke-linejoin="round" stroke-width="2"/>
<!-- select arrow -->
<path d="M365.5 112.5 L393.5 129.5 L379.5 132.5 L369 145.5 Z" fill="none" stroke="#fff" stroke-width="2.2" stroke-linejoin="round"/>
<path d="M418.0 124.25 L424 130.75 L430.0 124.25" fill="none" stroke="#1f2421" stroke-width="2.2" stroke-linecap="round" stroke-linejoin="round"/>
<path d="M455 116 V140" stroke="#cfd2d0" stroke-width="1.6"/>
<!-- H -->
<rect x="486.5" y="110.5" width="35" height="35" rx="6" fill="none" stroke="#1f2421" stroke-width="2.2" stroke-linecap="round" stroke-linejoin="round"/>
<path d="M494.5 116.5 V139.5 M513.5 116.5 V139.5 M494.5 128 H513.5 M490.5 116.5 H498.5 M509.5 116.5 H517.5 M490.5 139.5 H498.5 M509.5 139.5 H517.5" fill="none" stroke="#1f2421" stroke-width="2"/>
<path d="M544.0 124.25 L550 130.75 L556.0 124.25" fill="none" stroke="#1f2421" stroke-width="2.2" stroke-linecap="round" stroke-linejoin="round"/>
<!-- T -->
<path d="M592 121.5 V113 H629 V121.5 M610.5 113 V142.5 M601 142.5 H620" fill="none" stroke="#1f2421" stroke-width="2.2"/>
<path d="M652.0 124.25 L658 130.75 L664.0 124.25" fill="none" stroke="#1f2421" stroke-width="2.2" stroke-linecap="round" stroke-linejoin="round"/>
<!-- comment -->
<path d="M737.5 145.5 L719 145.2 A17.6 17.6 0 1 1 734.5 136 Z" fill="none" stroke="#1f2421" stroke-width="2.2" stroke-linecap="round" stroke-linejoin="round" />
<path d="M712.5 122.7 H725.5 M712.5 130.6 H721" fill="none" stroke="#1f2421" stroke-width="2.2" stroke-linecap="round" stroke-linejoin="round"/>
<!-- pencil -->
<path d="M786 147 L789.3 132.6 L807.5 111.2 a6.2 6.2 0 0 1 9.4 -0.2 l1.4 1.2 a6.2 6.2 0 0 1 0.6 9 L800 141.2 Z" fill="none" stroke="#1f2421" stroke-width="2.2" stroke-linecap="round" stroke-linejoin="round"/>
<path d="M789.3 132.6 C792 129.5 795.5 131 796.5 134 C799.5 133.5 802 136.5 800 141.2" fill="none" stroke="#1f2421" stroke-width="2.2" stroke-linecap="round" stroke-linejoin="round"/>
<!-- rect -->
<rect x="864.8" y="112.5" width="31" height="30.5" fill="none" stroke="#1f2421" stroke-width="2.3"/>
<path d="M920.0 124.25 L926 130.75 L932.0 124.25" fill="none" stroke="#1f2421" stroke-width="2.2" stroke-linecap="round" stroke-linejoin="round"/>
<!-- ruler -->
<path d="M968.5 108 V117.5 M1005.5 108 V117.5 M968.5 112.5 H1005.5" fill="none" stroke="#1f2421" stroke-width="2.2"/>
<rect x="968.5" y="124.5" width="37" height="20.5" rx="6" fill="none" stroke="#1f2421" stroke-width="2.2" stroke-linecap="round" stroke-linejoin="round"/>
<path d="M968.5 135 H1005.5 M976 124.5 V130 M983.5 124.5 V130 M991 124.5 V130 M998.5 124.5 V130" fill="none" stroke="#1f2421" stroke-width="2.2" stroke-linecap="round" stroke-linejoin="round"/>
<path d="M1028.0 124.25 L1034 130.75 L1040.0 124.25" fill="none" stroke="#1f2421" stroke-width="2.2" stroke-linecap="round" stroke-linejoin="round"/>
<!-- paperclip -->
<path d="M21.44 11.05l-9.19 9.19a6 6 0 0 1-8.49-8.49l9.19-9.19a4 4 0 0 1 5.66 5.66l-9.2 9.19a2 2 0 0 1-2.83-2.83l8.49-8.48" fill="none" stroke="#1f2421" stroke-width="1.4" stroke-linecap="round" stroke-linejoin="round" transform="translate(1077.5 106) scale(1.65)"/>
<!-- sticker -->
<path d="M1193 127 V117 a7 7 0 0 0 -7 -7 H1165.5 a7 7 0 0 0 -7 7 V138 a7 7 0 0 0 7 7 H1176 C1186 145 1193 137 1193 127 Z" fill="none" stroke="#1f2421" stroke-width="2.2" stroke-linecap="round" stroke-linejoin="round"/>
<path d="M1176 145 C1176 136 1184 128 1193 128" fill="none" stroke="#1f2421" stroke-width="2.2" stroke-linecap="round" stroke-linejoin="round"/>
<circle cx="1170" cy="122" r="1.6" fill="#1f2421"/><circle cx="1182" cy="122" r="1.6" fill="#1f2421"/>
<path d="M1168.5 129.5 C1170 135 1175 136 1178 134" fill="none" stroke="#1f2421" stroke-width="2.2" stroke-linecap="round" stroke-linejoin="round"/>
<!-- stamp -->
<circle cx="1256" cy="117.5" r="9" fill="none" stroke="#1f2421" stroke-width="2.2" stroke-linecap="round" stroke-linejoin="round"/>
<path d="M1252.5 126.5 V132 M1259.5 126.5 V132" fill="none" stroke="#1f2421" stroke-width="2.2" stroke-linecap="round" stroke-linejoin="round"/>
<rect x="1240" y="132.5" width="32.5" height="9" rx="4.5" fill="none" stroke="#1f2421" stroke-width="2.2" stroke-linecap="round" stroke-linejoin="round"/>
<path d="M1242 145.5 H1270" fill="none" stroke="#1f2421" stroke-width="2.2" stroke-linecap="round" stroke-linejoin="round"/>
<!-- signature -->
<path d="M1312 124.5 L1319 131.5 M1319 124.5 L1312 131.5" stroke="#1f2421" stroke-width="1.8"/>
<path d="M1312 136 H1362" stroke="#1f2421" stroke-width="1.8"/>
<path d="M1322 134 C1330 124 1340 114 1340 110 C1340 105 1332 110 1329 124 C1326 140 1328 150 1332 145 C1336 138 1334 128 1340 128 C1344 128 1343 133 1347 130 C1350 128 1351 132 1354 130 L1360 127" fill="none" stroke="#1f2421" stroke-width="2" stroke-linecap="round" stroke-linejoin="round"/>
<path d="M1385 116 V140" stroke="#cfd2d0" stroke-width="1.6"/>
<!-- undo/redo -->
<path d="M1603.5 117 L1597 123.5 L1603.5 130 M1597 123.5 H1610.5 a7 7 0 0 1 0 14 H1596.5" fill="none" stroke="#8d908e" stroke-width="2.2" stroke-linecap="round" stroke-linejoin="round"/>
<path d="M1680.5 117 L1687 123.5 L1680.5 130 M1687 123.5 H1673.5 a7 7 0 0 0 0 14 H1687.5" fill="none" stroke="#8d908e" stroke-width="2.2" stroke-linecap="round" stroke-linejoin="round"/>
<path d="M1719 116 V140" stroke="#d5d8d6" stroke-width="1.4"/>
<!-- save -->
<path d="M1745.5 138.5 V117 a6.5 6.5 0 0 1 6.5 -6.5 H1769 a6.5 6.5 0 0 1 6.5 6.5 V138.5 a6.5 6.5 0 0 1 -6.5 6.5 H1752 a6.5 6.5 0 0 1 -6.5 -6.5 Z" fill="none" stroke="#1f2421" stroke-width="2.2" stroke-linecap="round" stroke-linejoin="round"/>
<path d="M1754.5 110.5 V114.5 a3.5 3.5 0 0 0 3.5 3.5 H1763 a3.5 3.5 0 0 0 3.5 -3.5 V110.5" fill="none" stroke="#1f2421" stroke-width="2.2" stroke-linecap="round" stroke-linejoin="round"/>
<circle cx="1760.5" cy="131.5" r="4.6" fill="none" stroke="#1f2421" stroke-width="2.2" stroke-linecap="round" stroke-linejoin="round"/>
<path d="M1800.0 124.5 L1806 130.5 L1812.0 124.5" fill="none" stroke="#1f2421" stroke-width="2.2" stroke-linecap="round" stroke-linejoin="round"/>
<!-- AI -->
<filter id="bl" x="-30%" y="-30%" width="160%" height="160%"><feGaussianBlur stdDeviation="1.6"/></filter>
<circle cx="1858" cy="127.8" r="21.5" fill="url(#ai)" filter="url(#bl)"/>
<g fill="none" stroke="#fff" stroke-width="2.1">
<ellipse cx="1859.5" cy="127.8" rx="15.5" ry="7.8" transform="rotate(50 1859.5 127.8)"/>
<ellipse cx="1859.5" cy="127.8" rx="15.5" ry="7.8" transform="rotate(-40 1859.5 127.8)"/>
</g>
<path d="M1859.5 124.2 Q1860.1 127.2 1863.1 127.8 Q1860.1 128.4 1859.5 131.4 Q1858.9 128.4 1855.9 127.8 Q1858.9 127.2 1859.5 124.2 Z" fill="#fff"/>
</svg>
<svg class="a" width="1920" height="1374" viewBox="0 0 1920 1374" style="left:0;top:0;">
<rect x="451.5" y="676.5" width="17" height="28.5" rx="3" fill="none" stroke="#0a8f97" stroke-width="3"/>
<path d="M456 680 H464" stroke="#0a8f97" stroke-width="1.4"/>
<rect x="452.5" y="698.5" width="15" height="6" fill="#0a8f97"/>
<circle cx="460" cy="701.7" r="1.4" fill="#f4f5f5"/>
<rect x="446" y="738" width="29" height="19" rx="1.5" fill="#0a8f97"/>
<path d="M447.5 739.5 L460.5 750.5 L473.5 739.5 M447.5 755.5 L456.5 747 M473.5 755.5 L464.5 747" fill="none" stroke="#f4f5f5" stroke-width="1.6"/>
<path d="M455 909.5 V893 H451 V888 H455 V885.5 C455 880.5 458 879.5 462 879.5 H466 V884.5 H463 C461.5 884.5 461 885.5 461 886.5 V888 H466 L465.3 893 H461 V909.5 Z" fill="#0a8f97"/>
<path d="M471.5 941 C470.3 941.6 469.3 941.8 468.2 942 C469.4 941.2 470.3 940.2 470.7 938.8 C469.6 939.5 468.4 940 467.1 940.3 C466 939.1 464.5 938.4 462.8 938.4 C459.6 938.4 457 941 457 944.2 C457 944.7 457.1 945.1 457.2 945.5 C452.3 945.3 448.1 942.9 445.3 939.4 C444.8 940.3 444.5 941.3 444.5 942.3 C444.5 944.3 445.5 946.1 447.1 947.2 C446.1 947.2 445.2 946.9 444.5 946.5 C444.5 949.3 446.5 951.7 449.1 952.2 C448.6 952.3 448.1 952.4 447.5 952.4 C447.2 952.4 446.8 952.4 446.5 952.3 C447.2 954.6 449.4 956.3 451.9 956.4 C449.9 958 447.4 958.9 444.7 958.9 C444.2 958.9 443.8 958.9 443.3 958.8 C445.9 960.5 448.9 961.4 452.2 961.4 C462.8 961.4 468.6 952.6 468.6 945 V944.2 C469.8 943.4 470.7 942.3 471.5 941 Z" fill="#0a8f97"/>
<rect x="447.5" y="997.5" width="22.5" height="22.5" rx="2" fill="none" stroke="#0a8f97" stroke-width="3"/>
<circle cx="458.5" cy="1008.5" r="4.8" fill="none" stroke="#0a8f97" stroke-width="3.2"/>
<circle cx="465" cy="1001.8" r="1.5" fill="#0a8f97"/>
</svg>
<div class="a" style="left:1356px;top:170px;width:542px;height:1088px;background:#e6e9e7;border-radius:10px;box-shadow:0 6px 22px rgba(0,0,0,.16),0 0 2px rgba(0,0,0,.08)"></div>
<div class="t" id="t35" style="left:1425.0px;top:273.3px;font-size:24.64px;line-height:24.64px;color:#9ea19f;font-weight:normal;transform:scaleX(0.8482);">Save</div>
<div class="t" id="t36" style="left:1570.0px;top:273.3px;font-size:24.64px;line-height:24.64px;color:#1f2421;font-weight:normal;transform:scaleX(0.9592);">Duplicate</div>
<div class="t" id="t37" style="left:1760.7px;top:273.3px;font-size:24.64px;line-height:24.64px;color:#1f2421;font-weight:normal;transform:scaleX(0.8606);">Share</div>
<div class="t" id="t38" style="left:1442.7px;top:353.5px;font-size:26.23px;line-height:26.23px;color:#1f2421;font-weight:normal;transform:scaleX(0.8906);">Save as...</div>
<div class="t" id="t39" style="left:1736.5px;top:353.5px;font-size:26.23px;line-height:26.23px;color:#9ea19f;font-weight:normal;transform:scaleX(0.9043);">Ctrl+Shift+S</div>
<div class="t" id="t40" style="left:1442.7px;top:425.8px;font-size:26.38px;line-height:26.38px;color:#1f2421;font-weight:normal;transform:scaleX(0.8908);">Print...</div>
<div class="t" id="t41" style="left:1798.3px;top:425.8px;font-size:26.38px;line-height:26.38px;color:#9ea19f;font-weight:normal;transform:scaleX(0.8878);">Ctrl+P</div>
<div class="a" style="left:1388px;top:480px;width:478px;height:2px;background:#d3d7d4;border-radius:0px;"></div>
<div class="t" id="t42" style="left:1442.7px;top:513.7px;font-size:26.81px;line-height:26.81px;color:#1f2421;font-weight:normal;transform:scaleX(0.8879);">Save as PDF/A...</div>
<div class="t" id="t43" style="left:1442.7px;top:585.3px;font-size:26.38px;line-height:26.38px;color:#1f2421;font-weight:normal;transform:scaleX(0.9250);">Image PDF...</div>
<div class="t" id="t44" style="left:1442.7px;top:656.7px;font-size:26.67px;line-height:26.67px;color:#9ea19f;font-weight:normal;transform:scaleX(0.9433);">Remove Password</div>
<div class="a" style="left:1388px;top:712px;width:478px;height:2px;background:#d3d7d4;border-radius:0px;"></div>
<div class="t" id="t45" style="left:1380.6px;top:742.7px;font-size:23.91px;line-height:23.91px;color:#4b534e;font-weight:bold;transform:scaleX(0.9295);">UPDF Cloud</div>
<div class="t" id="t46" style="left:1442.4px;top:817.1px;font-size:27.68px;line-height:27.68px;color:#1f2421;font-weight:normal;transform:scaleX(0.8942);">Save to UPDF Cloud</div>
<div class="a" style="left:1375px;top:870px;width:507px;height:63px;background:#dce1d9;border-radius:14px;"></div>
<div class="t" id="t47" style="left:1443.0px;top:889.3px;font-size:26.52px;line-height:26.52px;color:#1f2421;font-weight:normal;transform:scaleX(0.8933);">UPDF Share</div>
<div class="a" style="left:1388px;top:944px;width:478px;height:2px;background:#d3d7d4;border-radius:0px;"></div>
<div class="t" id="t48" style="left:1380.2px;top:975.4px;font-size:24.49px;line-height:24.49px;color:#4b534e;font-weight:bold;transform:scaleX(0.9371);">Save as Other</div>
<div class="t" id="t49" style="left:1442.8px;top:1049.4px;font-size:26.38px;line-height:26.38px;color:#1f2421;font-weight:normal;transform:scaleX(0.9167);">Reduce File Size...</div>
<div class="t" id="t50" style="left:1442.8px;top:1121.6px;font-size:26.38px;line-height:26.38px;color:#1f2421;font-weight:normal;transform:scaleX(0.9677);">Protect Using Password...</div>
<div class="t" id="t51" style="left:1442.8px;top:1193.3px;font-size:26.38px;line-height:26.38px;color:#1f2421;font-weight:normal;transform:scaleX(0.9210);">Save as Flatten...</div>
<svg class="a" width="1920" height="1374" viewBox="0 0 1920 1374" style="left:0;top:0;">
<!-- save gray -->
<path d="M1432.5 242 V221 a6.5 6.5 0 0 1 6.5 -6.5 H1457 a6.5 6.5 0 0 1 6.5 6.5 V242 a6.5 6.5 0 0 1 -6.5 6.5 H1439 a6.5 6.5 0 0 1 -6.5 -6.5 Z" fill="none" stroke="#9ea19f" stroke-width="2" stroke-linecap="round" stroke-linejoin="round"/>
<path d="M1441.5 214.5 V218.5 a3.5 3.5 0 0 0 3.5 3.5 H1451 a3.5 3.5 0 0 0 3.5 -3.5 V214.5" fill="none" stroke="#9ea19f" stroke-width="2" stroke-linecap="round" stroke-linejoin="round"/>
<circle cx="1448" cy="235" r="4.6" fill="none" stroke="#9ea19f" stroke-width="2" stroke-linecap="round" stroke-linejoin="round"/>
<!-- duplicate -->
<path d="M1608 238 H1605 a5 5 0 0 1 -5 -5 V219.5 a5 5 0 0 1 5 -5 H1619 a5 5 0 0 1 5 5 V222" fill="none" stroke="#1f2421" stroke-width="2" stroke-linecap="round" stroke-linejoin="round"/>
<rect x="1611" y="222" width="24.5" height="26.5" rx="5" fill="none" stroke="#1f2421" stroke-width="2" stroke-linecap="round" stroke-linejoin="round"/>
<path d="M1623.3 229 V241 M1617.3 235 H1629.3" fill="none" stroke="#1f2421" stroke-width="2" stroke-linecap="round" stroke-linejoin="round"/>
<!-- share -->
<path d="M1782 225 H1779.5 a5 5 0 0 0 -5 5 V243.5 a5 5 0 0 0 5 5 H1798.5 a5 5 0 0 0 5 -5 V230 a5 5 0 0 0 -5 -5 H1796" fill="none" stroke="#1f2421" stroke-width="2" stroke-linecap="round" stroke-linejoin="round"/>
<path d="M1789 234 V213 M1781.5 220.5 L1789 213 L1796.5 220.5" fill="none" stroke="#1f2421" stroke-width="2" stroke-linecap="round" stroke-linejoin="round"/>
<!-- save as -->
<path d="M1386.5 362 V378 a5 5 0 0 0 5 5 H1414 a5 5 0 0 0 5 -5 V362" fill="none" stroke="#1f2421" stroke-width="2" stroke-linecap="round" stroke-linejoin="round"/>
<path d="M1392 371 V353 a4.5 4.5 0 0 1 4.5 -4.5 H1408.5 a4.5 4.5 0 0 1 4.5 4.5 V371" fill="none" stroke="#1f2421" stroke-width="2" stroke-linecap="round" stroke-linejoin="round"/>
<path d="M1386.5 370 H1396 V372 a6 6 0 0 0 12.5 0 V370 H1419" fill="none" stroke="#1f2421" stroke-width="2" stroke-linecap="round" stroke-linejoin="round"/>
<path d="M1397 356 H1408 M1397 362.5 H1404" fill="none" stroke="#1f2421" stroke-width="2" stroke-linecap="round" stroke-linejoin="round"/>
<!-- print -->
<path d="M1393 428.5 V421 a4 4 0 0 1 4 -4 H1410.5 a4 4 0 0 1 4 4 V428.5" fill="none" stroke="#1f2421" stroke-width="2" stroke-linecap="round" stroke-linejoin="round"/>
<path d="M1393 449.5 H1391.5 a5 5 0 0 1 -5 -5 V433.5 a5 5 0 0 1 5 -5 H1416 a5 5 0 0 1 5 5 V444.5 a5 5 0 0 1 -5 5 H1414.5" fill="none" stroke="#1f2421" stroke-width="2" stroke-linecap="round" stroke-linejoin="round"/>
<rect x="1393" y="440.5" width="21.5" height="17" rx="2" fill="none" stroke="#1f2421" stroke-width="2" stroke-linecap="round" stroke-linejoin="round"/>
<path d="M1410 434.5 H1410.5 M1414 434.5 H1414.5" fill="none" stroke="#1f2421" stroke-width="2" stroke-linecap="round" stroke-linejoin="round"/>
<!-- pdf/a -->
<path d="M1388.5 520 V514 a6 6 0 0 1 6 -6 H1414.5 a6 6 0 0 1 6 6 V520 M1388.5 539 V540 a6 6 0 0 0 6 6 H1414.5 a6 6 0 0 0 6 -6 V539" fill="none" stroke="#1f2421" stroke-width="2" stroke-linecap="round" stroke-linejoin="round"/>
<text x="1386" y="536.5" font-family="Liberation Sans" font-weight="bold" font-size="15" fill="#1f2421" textLength="37" lengthAdjust="spacingAndGlyphs">PDF/A</text>
<!-- image pdf -->
<path d="M1400 617 H1392 a5 5 0 0 1 -5 -5 V584 a5 5 0 0 1 5 -5 H1413.5 a5 5 0 0 1 5 5 V597" fill="none" stroke="#1f2421" stroke-width="2" stroke-linecap="round" stroke-linejoin="round"/>
<path d="M1394 586 C1396 589 1399 592 1401 591 M1397 590 L1394 596 M1397 590 L1404 594" fill="none" stroke="#1f2421" stroke-width="2" stroke-linecap="round" stroke-linejoin="round"/>
<circle cx="1395" cy="587" r="1.5" fill="#1f2421"/>
<rect x="1404" y="600" width="16" height="16.5" rx="4" fill="none" stroke="#1f2421" stroke-width="2" stroke-linecap="round" stroke-linejoin="round"/>
<circle cx="1409" cy="605.5" r="1.6" fill="#1f2421"/>
<path d="M1406 614 L1419 603" fill="none" stroke="#1f2421" stroke-width="2" stroke-linecap="round" stroke-linejoin="round"/>
<!-- remove password gray -->
<path d="M1399 688 H1392 a5 5 0 0 1 -5 -5 V656 a5 5 0 0 1 5 -5 H1413.5 a5 5 0 0 1 5 5 V667" fill="none" stroke="#9ea19f" stroke-width="2" stroke-linecap="round" stroke-linejoin="round"/>
<path d="M1394 658 C1396 661 1399 664 1401 663 M1397 662 L1394 668 M1397 662 L1404 666" fill="none" stroke="#9ea19f" stroke-width="2" stroke-linecap="round" stroke-linejoin="round"/>
<rect x="1403" y="673.5" width="18" height="15" rx="4" fill="none" stroke="#9ea19f" stroke-width="2" stroke-linecap="round" stroke-linejoin="round"/>
<path d="M1407 673.5 V670 a5 5 0 0 1 10 0 V673.5 M1409 678 L1415 684 M1415 678 L1409 684" fill="none" stroke="#9ea19f" stroke-width="2" stroke-linecap="round" stroke-linejoin="round"/>
<!-- cloud -->
<path d="M1397 839 H1394 a9.5 9.5 0 0 1 -2.5 -18.7 a11.5 11.5 0 0 1 22.5 -1 a9.5 9.5 0 0 1 0 19.7 H1410" fill="none" stroke="#1f2421" stroke-width="2" stroke-linecap="round" stroke-linejoin="round"/>
<path d="M1403.5 849.5 V829 M1397.5 835 L1403.5 829 L1409.5 835" fill="none" stroke="#1f2421" stroke-width="2" stroke-linecap="round" stroke-linejoin="round"/>
<!-- link -->
<g transform="translate(1404 902.5) rotate(-45)">
<path d="M-4 -6.5 H14 A6.5 6.5 0 0 1 14 6.5 H7" fill="none" stroke="#1f2421" stroke-width="2" stroke-linecap="round" stroke-linejoin="round"/>
<path d="M4 6.5 H-14 A6.5 6.5 0 0 1 -14 -6.5 H-7" fill="none" stroke="#1f2421" stroke-width="2" stroke-linecap="round" stroke-linejoin="round"/>
<path d="M-6 0 H6" fill="none" stroke="#1f2421" stroke-width="2" stroke-linecap="round" stroke-linejoin="round"/>
</g>
<!-- reduce -->
<path d="M1400 1080.5 H1391.5 a5 5 0 0 1 -5 -5 V1047.5 a5 5 0 0 1 5 -5 H1410.5 a5 5 0 0 1 5 5 V1058" fill="none" stroke="#1f2421" stroke-width="2" stroke-linecap="round" stroke-linejoin="round"/>
<rect x="1404" y="1060" width="16" height="21" rx="4.5" fill="none" stroke="#1f2421" stroke-width="2" stroke-linecap="round" stroke-linejoin="round"/>
<path d="M1393.5 1050 L1399.5 1056 M1394 1056 H1399.5 V1050.5" fill="none" stroke="#1f2421" stroke-width="2" stroke-linecap="round" stroke-linejoin="round"/>
<!-- protect -->
<path d="M1404 1153 C1395 1149 1387 1141 1387 1131 V1122 C1395 1122 1400 1119 1404 1117 C1408 1119 1413 1122 1420 1122 V1130" fill="none" stroke="#1f2421" stroke-width="2" stroke-linecap="round" stroke-linejoin="round"/>
<path d="M1404 1117 V1153" fill="none" stroke="#1f2421" stroke-width="2" stroke-linecap="round" stroke-linejoin="round"/>
<rect x="1409" y="1141" width="16" height="12.5" rx="3" fill="none" stroke="#1f2421" stroke-width="2" stroke-linecap="round" stroke-linejoin="round"/>
<path d="M1413 1141 V1137.5 a4 4 0 0 1 8 0 V1141" fill="none" stroke="#1f2421" stroke-width="2" stroke-linecap="round" stroke-linejoin="round"/>
<!-- flatten -->
<path d="M1403 1187 V1203 M1397 1197 L1403 1203 L1409 1197" fill="none" stroke="#1f2421" stroke-width="2" stroke-linecap="round" stroke-linejoin="round"/>
<path d="M1393 1201 L1384 1206.5 L1403 1217 L1422 1206.5 L1413 1201" fill="none" stroke="#1f2421" stroke-width="2" stroke-linecap="round" stroke-linejoin="round"/>
<path d="M1387.5 1213 L1384 1215.5 L1403 1226 L1422 1215.5 L1418.5 1213" fill="none" stroke="#1f2421" stroke-width="2" stroke-linecap="round" stroke-linejoin="round"/>
</svg>
<div class="a" style="left:1057px;top:1279px;width:841px;height:78px;background:#e6e9e7;border-radius:20px;box-shadow:0 3px 14px rgba(0,0,0,.14)"></div>
<div class="a" style="left:1299px;top:1287px;width:62px;height:62px;background:transparent;border-radius:14px;border:2.2px solid #4ca46e"></div>
<div class="a" style="left:1557px;top:1292px;width:93px;height:52px;background:#f1f3f1;border-radius:14px;"></div>
<div class="t" id="t52" style="left:1582.0px;top:1306.7px;font-size:24.78px;line-height:24.78px;color:#1f2421;font-weight:normal;transform:scaleX(0.8520);">64%</div>
<svg class="a" width="1920" height="1374" viewBox="0 0 1920 1374" style="left:0;top:0;">
<circle cx="1088" cy="1318" r="15.5" fill="#cdd5ce"/>
<path d="M1331.2 1330.8 V1308.5 L1323.5 1313.5" fill="none" stroke="#1f2421" stroke-width="2.4" stroke-linejoin="round"/>
<path d="M1085.5 1312 L1091 1318 L1085.5 1324" fill="none" stroke="#1f2421" stroke-width="2" stroke-linecap="round" stroke-linejoin="round" stroke-width="2.2"/>
<path d="M1151 1302.5 V1333.5 M1137.5 1302.5 H1164.5 a5.5 5.5 0 0 1 5.5 5.5 V1328 a5.5 5.5 0 0 1 -5.5 5.5 H1137.5 a5.5 5.5 0 0 1 -5.5 -5.5 V1308 a5.5 5.5 0 0 1 5.5 -5.5 Z" fill="none" stroke="#1f2421" stroke-width="2" stroke-linecap="round" stroke-linejoin="round" stroke-width="2.2"/>
<path d="M1137.5 1310.5 H1146 M1137.5 1317.5 H1146 M1137.5 1324.5 H1140 M1156 1310.5 H1164.5 M1156 1317.5 H1164.5 M1156 1324.5 H1159" fill="none" stroke="#1f2421" stroke-width="2" stroke-linecap="round" stroke-linejoin="round" stroke-width="2.2"/>
<path d="M1225 1327.5 H1217.5 a5.5 5.5 0 0 1 -5.5 -5.5 V1308 a5.5 5.5 0 0 1 5.5 -5.5 H1246 a5.5 5.5 0 0 1 5.5 5.5 V1322 a5.5 5.5 0 0 1 -5.5 5.5 H1239" fill="none" stroke="#1f2421" stroke-width="2" stroke-linecap="round" stroke-linejoin="round" stroke-width="2.2"/>
<path d="M1232 1325 L1238.5 1335 H1225.5 Z" fill="none" stroke="#1f2421" stroke-width="2" stroke-linecap="round" stroke-linejoin="round" stroke-width="2.2"/>
<path d="M1281 1306 V1330" stroke="#d0d3d1" stroke-width="1.6"/>
<path d="M1400 1320.5 L1410.3 1309.5 L1420.5 1320.5" fill="none" stroke="#8d908e" stroke-width="2.2" stroke-linecap="round" stroke-linejoin="round"/>
<path d="M1479.5 1313 L1490 1323.5 L1500.5 1313" fill="none" stroke="#8d908e" stroke-width="2.2" stroke-linecap="round" stroke-linejoin="round"/>
<path d="M1539 1306 V1330" stroke="#d0d3d1" stroke-width="1.6"/>
<path d="M1688 1316 H1710" stroke="#1f2421" stroke-width="2.4"/>
<path d="M1767 1316 H1790 M1778.5 1305 V1327" stroke="#1f2421" stroke-width="2.4"/>
<rect x="1842.5" y="1303.5" width="34.5" height="29.5" rx="5.5" fill="none" stroke="#1f2421" stroke-width="2" stroke-linecap="round" stroke-linejoin="round" stroke-width="2.2"/>
<text x="1859.8" y="1323.5" font-family="Liberation Sans" font-weight="bold" font-size="13" text-anchor="middle" fill="#1f2421">1:1</text>
</svg>
<svg class="a" width="1920" height="1374" viewBox="0 0 1920 1374" style="left:0;top:0;">
<rect x="1377" y="868" width="222.5" height="64.5" rx="2" fill="none" stroke="#4242d2" stroke-width="8"/>
<path d="M1787.2 152 L1790.8 152 L1581 816 L1594.7 816.3 L1556.2 856 L1548.8 801 L1561.5 809.7 Z" fill="#4343d0" stroke="#4343d0" stroke-width="1" stroke-linejoin="round"/>
<circle cx="1789" cy="152.5" r="2" fill="#4343d0"/>
</svg>
</body></html>
